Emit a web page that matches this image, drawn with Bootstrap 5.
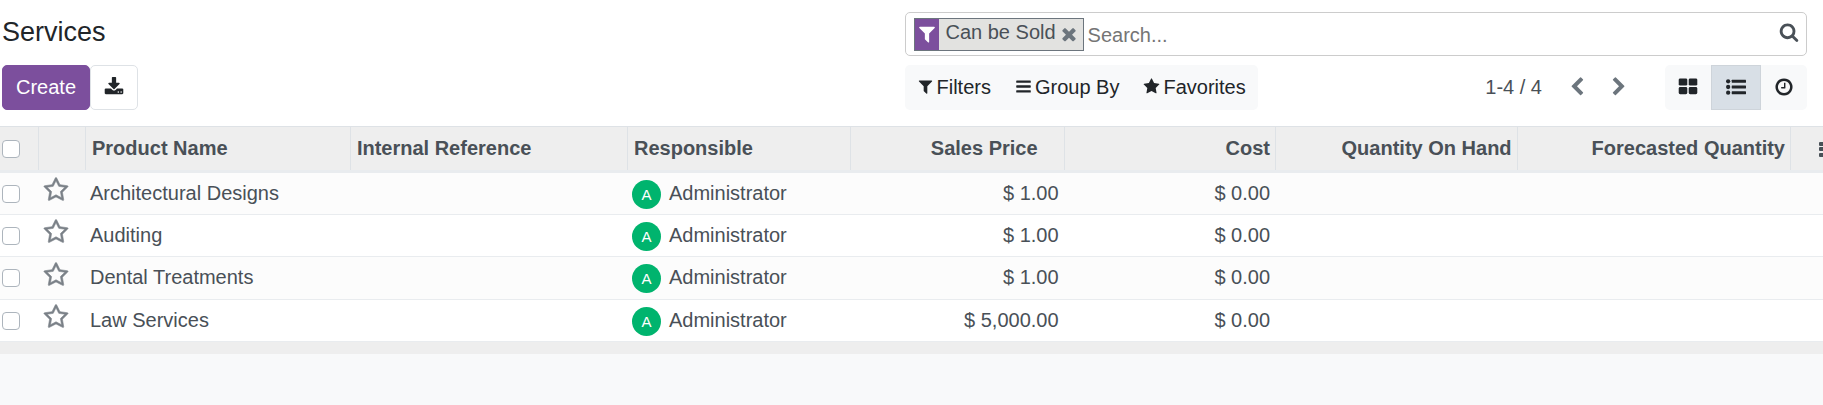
<!DOCTYPE html>
<html lang="en">
<head>
<meta charset="utf-8">
<meta name="viewport" content="width=device-width, initial-scale=1">
<title>Services</title>
<link rel="stylesheet" href="https://cdn.jsdelivr.net/npm/bootstrap@5.3.0/dist/css/bootstrap.min.css">
<style>
  body { font-family: "Liberation Sans", Arial, sans-serif; font-size: 20px; line-height: 30px; color: #495057; background: #f8f9fa; overflow-x: hidden; }
  .ico { width: 20px; height: 20px; fill: currentColor; flex: none; display: block; }
  .ico-sm { width: 17px; height: 17px; }
  .ico-lg { width: 26px; height: 26px; stroke: currentColor; stroke-width: 40px; }
  .ico-dots { width: 5px; }
  .control-panel { padding: 12px 16px 16px 2px; row-gap: 9px; }
  .page-title { font-size: 27px; line-height: 40px; color: #212529; }
  .control-panel .btn { font-size: 20px; line-height: 30px; height: 45px; border-radius: 5px; color: #212529; }
  .control-panel .btn-create { background: #7c4f9d; border-color: #7c4f9d; color: #fff; padding: 0 13px 2px; }
  .control-panel .btn-export { border-color: #dee2e6; background: #fff; padding: 0 13px 2px; }
  .search-box { height: 44px; border: 1px solid #ccc; border-radius: 5px; padding: 0 7px 0 8px; }
  .facet { height: 33px; border: 1px solid #6c757d; background: #e2e2e0; }
  .facet-icon { background: #7c4f9d; color: #fff; width: 24px; }
  .facet-text { padding: 0 3px 4px 7px; }
  .facet button { color: #6c757d; padding: 0 4px 0 0; }
  .search-box input { outline: 0; color: #495057; padding: 2px 4px 0; min-width: 0; }
  .search-box input::placeholder { color: #757575; }
  .tool-group { background: #f8f9fa; border-radius: 5px; }
  .tool-group .btn { padding: 0 11px 2px; gap: 3px; border-color: transparent; }
  .pager { column-gap: 22px; color: #6c757d; padding-bottom: 2px; margin-right: 36px; }
  .pager-text { color: #495057; margin-right: 3px; }
  .tool-group .btn-view { padding: 0 12px 2px; }
  .tool-group .btn-view.active { background: #d8dfe6; border-color: #ced4da; border-radius: 0; padding: 0 14px 2px; }
  .list-table { table-layout: fixed; margin: 0; color: #495057; background: #fff; }
  .list-table th, .list-table td { padding: 0 5px 2px; vertical-align: middle; white-space: nowrap; overflow: hidden; }
  .list-table thead tr { height: 45px; background: #eee; border-top: 1px solid #dee2e6; border-bottom: 3px solid #e9ecef; }
  .list-table thead th + th { background: linear-gradient(#dee2e6, #dee2e6) left / 1px 100% no-repeat; }
  .list-table tbody tr { height: 42px; border-bottom: 1px solid #e9ecef; }
  .list-table tbody tr:nth-child(odd) { height: 43px; background: #fcfcfc; }
  .list-table tfoot tr { height: 12px; background: #eee; }
  .list-table thead th { padding: 0 5px 1px 7px; }
  .list-table thead .cell-sortable { padding-right: 26px; }
  .list-table thead .cell-menu { padding: 0 0 0 29px; }
  .list-table .cell-check, .list-table thead .cell-check { padding: 0 2px; }
  .cell-check .form-check-input { width: 18px; height: 18px; margin: 0; border: 1px solid #adb5bd; border-radius: 4px; display: block; }
  .star-btn { color: #7a8087; padding-bottom: 5px; }
  .avatar { width: 29px; height: 29px; background: #00b46e; color: #fff; font-size: 15px; line-height: 29px; margin-top: 3px; }
  .col-check { width: 38px; } .col-star { width: 47px; } .col-menu { width: 33px; }
  .col-ref { width: 15.2%; } .col-resp { width: 12.25%; } .col-price { width: 11.7%; }
  .col-cost { width: 11.6%; } .col-hand { width: 13.25%; } .col-fore { width: 15%; }
</style>
</head>
<body>
<svg class="d-none" aria-hidden="true">
  <symbol id="i-filter" viewBox="0 0 1792 1792"><path d="M1595 295q17 41-14 70l-493 493v742q0 42-39 59-13 5-25 5-27 0-45-19l-256-256q-19-19-19-45v-486l-493-493q-31-29-14-70 17-39 59-39h1280q42 0 59 39z"/></symbol>
  <symbol id="i-search" viewBox="0 0 1792 1792"><path d="M1216 832q0-185-131.5-316.5t-316.5-131.5-316.5 131.5-131.5 316.5 131.5 316.5 316.5 131.5 316.5-131.5 131.5-316.5zm512 832q0 52-38 90t-90 38q-54 0-90-38l-343-342q-179 124-399 124-143 0-273.5-55.5t-225-150-150-225-55.5-273.5 55.5-273.5 150-225 225-150 273.5-55.5 273.5 55.5 225 150 150 225 55.5 273.5q0 220-124 399l343 343q37 37 37 90z"/></symbol>
  <symbol id="i-times" viewBox="0 0 1792 1792"><path d="M1490 1322q0 40-28 68l-136 136q-28 28-68 28t-68-28l-294-294-294 294q-28 28-68 28t-68-28l-136-136q-28-28-28-68t28-68l294-294-294-294q-28-28-28-68t28-68l136-136q28-28 68-28t68 28l294 294 294-294q28-28 68-28t68 28l136 136q28 28 28 68t-28 68l-294 294 294 294q28 28 28 68z"/></symbol>
  <symbol id="i-bars" viewBox="0 0 1792 1792"><rect x="128" y="256" width="1536" height="256" rx="64"/><rect x="128" y="768" width="1536" height="256" rx="64"/><rect x="128" y="1280" width="1536" height="256" rx="64"/></symbol>
  <symbol id="i-star" viewBox="0 0 1792 1792"><path d="M1728 647q0 22-26 48l-363 354 86 500q1 7 1 20 0 21-10.5 35.5t-30.5 14.5q-19 0-40-12l-449-236-449 236q-22 12-40 12-21 0-31.5-14.5t-10.5-35.5q0-6 2-20l86-500-364-354q-25-27-25-48 0-37 56-46l502-73 225-455q19-41 49-41t49 41l225 455 502 73q56 9 56 46z"/></symbol>
  <symbol id="i-star-o" viewBox="0 0 1792 1792"><path d="M1201 1004l306-297-422-62-189-382-189 382-422 62 306 297-73 421 378-199 377 199zm527-357q0 22-26 48l-363 354 86 500q1 7 1 20 0 50-41 50-19 0-40-12l-449-236-449 236q-22 12-40 12-21 0-31.5-14.5t-10.5-35.5q0-6 2-20l86-500-364-354q-25-27-25-48 0-37 56-46l502-73 225-455q19-41 49-41t49 41l225 455 502 73q56 9 56 46z"/></symbol>
  <symbol id="i-left" viewBox="0 0 1792 1792"><path d="M1427 301l-531 531 531 531q19 19 19 45t-19 45l-166 166q-19 19-45 19t-45-19l-742-742q-19-19-19-45t19-45l742-742q19-19 45-19t45 19l166 166q19 19 19 45t-19 45z"/></symbol>
  <symbol id="i-right" viewBox="0 0 1792 1792"><path d="M1363 877l-742 742q-19 19-45 19t-45-19l-166-166q-19-19-19-45t19-45l531-531-531-531q-19-19-19-45t19-45l166-166q19-19 45-19t45 19l742 742q19 19 19 45t-19 45z"/></symbol>
  <symbol id="i-grid" viewBox="0 0 1792 1792"><rect x="64" y="128" width="768" height="640" rx="128"/><rect x="960" y="128" width="768" height="640" rx="128"/><rect x="64" y="896" width="768" height="640" rx="128"/><rect x="960" y="896" width="768" height="640" rx="128"/></symbol>
  <symbol id="i-list" viewBox="0 0 1792 1792"><circle cx="192" cy="384" r="192"/><circle cx="192" cy="896" r="192"/><circle cx="192" cy="1408" r="192"/><rect x="512" y="256" width="1280" height="256" rx="32"/><rect x="512" y="768" width="1280" height="256" rx="32"/><rect x="512" y="1280" width="1280" height="256" rx="32"/></symbol>
  <symbol id="i-clock" viewBox="0 0 1792 1792"><path d="M1024 544v448q0 14-9 23t-23 9h-320q-14 0-23-9t-9-23v-64q0-14 9-23t23-9h224v-352q0-14 9-23t23-9h64q14 0 23 9t9 23zm416 352q0-148-73-273t-198-198-273-73-273 73-198 198-73 273 73 273 198 198 273 73 273-73 198-198 73-273zm224 0q0 209-103 385.5t-279.5 279.5-385.5 103-385.5-103-279.5-279.5-103-385.5 103-385.5 279.5-279.5 385.5-103 385.5 103 279.5 279.5 103 385.5z"/></symbol>
  <symbol id="i-download" viewBox="0 0 1792 1792"><path d="M1344 1344q0-26-19-45t-45-19-45 19-19 45 19 45 45 19 45-19 19-45zm256 0q0-26-19-45t-45-19-45 19-19 45 19 45 45 19 45-19 19-45zm128-224v320q0 40-28 68t-68 28h-1472q-40 0-68-28t-28-68v-320q0-40 28-68t68-28h465l135 136q58 56 136 56t136-56l136-136h464q40 0 68 28t28 68zm-325-569q17 41-14 70l-448 448q-18 19-45 19t-45-19l-448-448q-31-29-14-70 17-39 59-39h256v-448q0-26 19-45t45-19h256q26 0 45 19t19 45v448h256q42 0 59 39z"/></symbol>
  <symbol id="i-dots" viewBox="0 0 5 20"><rect y="3" width="5" height="4" rx="1"/><rect y="8" width="5" height="4" rx="1"/><rect y="14" width="5" height="4" rx="1"/></symbol>
</svg>

<header class="control-panel row g-0 bg-white m-0">
  <div class="col-6"><h1 class="page-title fw-normal m-0">Services</h1></div>
  <div class="col-6">
    <div class="search-box d-flex align-items-center bg-white" role="search">
      <div class="facet d-flex">
        <span class="facet-icon d-flex align-items-center justify-content-center"><svg class="ico"><use href="#i-filter"/></svg></span>
        <span class="facet-text d-flex align-items-center text-nowrap">Can be Sold</span>
        <button type="button" class="border-0 bg-transparent d-flex align-items-center" aria-label="Remove"><svg class="ico"><use href="#i-times"/></svg></button>
      </div>
      <input type="text" class="border-0 bg-transparent flex-grow-1" placeholder="Search..." aria-label="Search">
      <button type="button" class="border-0 bg-transparent p-0 pb-1 text-reset" aria-label="Run search"><svg class="ico"><use href="#i-search"/></svg></button>
    </div>
  </div>
  <div class="col-6 d-flex">
    <button type="button" class="btn btn-create">Create</button>
    <button type="button" class="btn btn-export d-flex align-items-center" aria-label="Export all"><svg class="ico"><use href="#i-download"/></svg></button>
  </div>
  <div class="col-6 d-flex justify-content-between">
    <div class="tool-group d-flex">
      <button type="button" class="btn d-flex align-items-center"><svg class="ico ico-sm"><use href="#i-filter"/></svg>Filters</button>
      <button type="button" class="btn d-flex align-items-center"><svg class="ico ico-sm"><use href="#i-bars"/></svg>Group By</button>
      <button type="button" class="btn d-flex align-items-center"><svg class="ico ico-sm"><use href="#i-star"/></svg>Favorites</button>
    </div>
    <div class="d-flex align-items-center">
      <div class="pager d-flex align-items-center">
        <span class="pager-text">1-4 / 4</span>
        <button type="button" class="border-0 bg-transparent p-0 text-reset" aria-label="Previous"><svg class="ico"><use href="#i-left"/></svg></button>
        <button type="button" class="border-0 bg-transparent p-0 text-reset" aria-label="Next"><svg class="ico"><use href="#i-right"/></svg></button>
      </div>
      <div class="tool-group d-flex">
        <button type="button" class="btn btn-view d-flex align-items-center" aria-label="Kanban"><svg class="ico"><use href="#i-grid"/></svg></button>
        <button type="button" class="btn btn-view active d-flex align-items-center" aria-label="List"><svg class="ico"><use href="#i-list"/></svg></button>
        <button type="button" class="btn btn-view d-flex align-items-center" aria-label="Activity"><svg class="ico"><use href="#i-clock"/></svg></button>
      </div>
    </div>
  </div>
</header>

<main>
  <table class="list-table w-100">
    <colgroup><col class="col-check"><col class="col-star"><col><col class="col-ref"><col class="col-resp"><col class="col-price"><col class="col-cost"><col class="col-hand"><col class="col-fore"><col class="col-menu"></colgroup>
    <thead>
      <tr>
        <th class="cell-check"><input class="form-check-input" type="checkbox" aria-label="Select all"></th>
        <th></th>
        <th>Product Name</th>
        <th>Internal Reference</th>
        <th>Responsible</th>
        <th class="text-end cell-sortable">Sales Price</th>
        <th class="text-end">Cost</th>
        <th class="text-end">Quantity On Hand</th>
        <th class="text-end">Forecasted Quantity</th>
        <th class="cell-menu"><button type="button" class="border-0 bg-transparent p-0 text-reset d-block" aria-label="Optional columns"><svg class="ico ico-dots"><use href="#i-dots"/></svg></button></th>
      </tr>
    </thead>
    <tbody>
      <tr>
        <td class="cell-check"><input class="form-check-input" type="checkbox" aria-label="Select Architectural Designs"></td>
        <td><button type="button" class="star-btn border-0 bg-transparent px-0 pt-0 d-block" aria-label="Favorite"><svg class="ico ico-lg"><use href="#i-star-o"/></svg></button></td>
        <td>Architectural Designs</td><td></td>
        <td><div class="d-flex align-items-center"><span class="avatar rounded-circle text-center">A</span><span class="ps-2">Administrator</span></div></td>
        <td class="text-end">$ 1.00</td><td class="text-end">$ 0.00</td><td></td><td></td><td></td>
      </tr>
      <tr>
        <td class="cell-check"><input class="form-check-input" type="checkbox" aria-label="Select Auditing"></td>
        <td><button type="button" class="star-btn border-0 bg-transparent px-0 pt-0 d-block" aria-label="Favorite"><svg class="ico ico-lg"><use href="#i-star-o"/></svg></button></td>
        <td>Auditing</td><td></td>
        <td><div class="d-flex align-items-center"><span class="avatar rounded-circle text-center">A</span><span class="ps-2">Administrator</span></div></td>
        <td class="text-end">$ 1.00</td><td class="text-end">$ 0.00</td><td></td><td></td><td></td>
      </tr>
      <tr>
        <td class="cell-check"><input class="form-check-input" type="checkbox" aria-label="Select Dental Treatments"></td>
        <td><button type="button" class="star-btn border-0 bg-transparent px-0 pt-0 d-block" aria-label="Favorite"><svg class="ico ico-lg"><use href="#i-star-o"/></svg></button></td>
        <td>Dental Treatments</td><td></td>
        <td><div class="d-flex align-items-center"><span class="avatar rounded-circle text-center">A</span><span class="ps-2">Administrator</span></div></td>
        <td class="text-end">$ 1.00</td><td class="text-end">$ 0.00</td><td></td><td></td><td></td>
      </tr>
      <tr>
        <td class="cell-check"><input class="form-check-input" type="checkbox" aria-label="Select Law Services"></td>
        <td><button type="button" class="star-btn border-0 bg-transparent px-0 pt-0 d-block" aria-label="Favorite"><svg class="ico ico-lg"><use href="#i-star-o"/></svg></button></td>
        <td>Law Services</td><td></td>
        <td><div class="d-flex align-items-center"><span class="avatar rounded-circle text-center">A</span><span class="ps-2">Administrator</span></div></td>
        <td class="text-end">$ 5,000.00</td><td class="text-end">$ 0.00</td><td></td><td></td><td></td>
      </tr>
    </tbody>
    <tfoot><tr><td colspan="10"></td></tr></tfoot>
  </table>
</main>
<script src="https://cdn.jsdelivr.net/npm/bootstrap@5.3.0/dist/js/bootstrap.bundle.min.js"></script>
</body>
</html>
